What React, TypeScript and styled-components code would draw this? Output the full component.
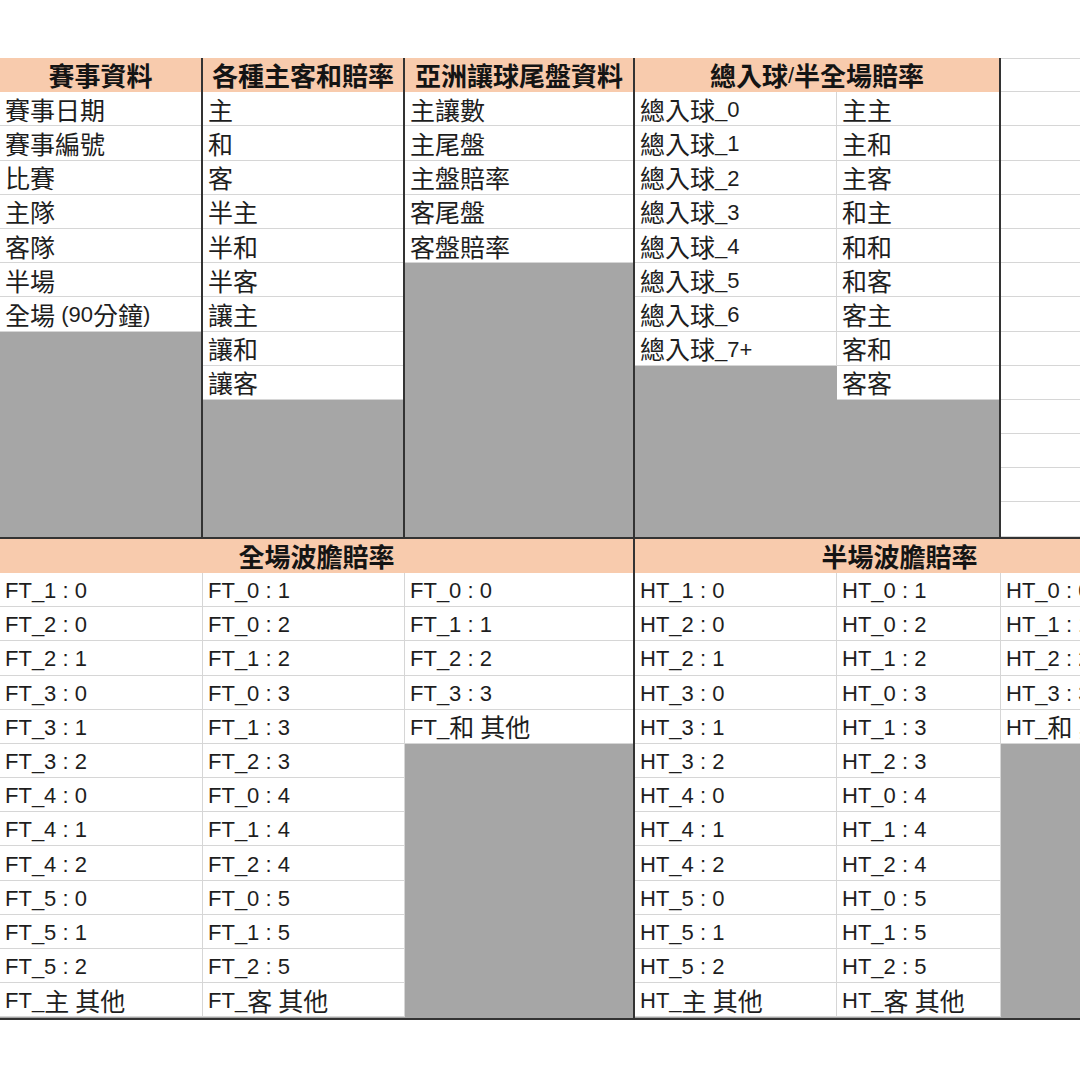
import React from "react";
import styled, { createGlobalStyle, css } from "styled-components";

const ROW = 34.2;
const DARK = "#333333";
const GRID = "#d6d6d6";
const PEACH = "#f8cbad";
const SHADE = "#a6a6a6";

const GlobalStyle = createGlobalStyle`
  html, body {
    margin: 0;
    padding: 0;
    background: #ffffff;
    overflow: hidden;
  }
  body {
    font-family: "Noto Sans CJK TC", "Noto Sans CJK SC", sans-serif;
    color: #1e1e1e;
  }
`;

const Sheet = styled.div`
  width: 1080px;
  height: 1080px;
  overflow: hidden;
  padding-top: 58px;
  box-sizing: border-box;
`;

const Section = styled.div`
  display: flex;
  width: 1164px;
  height: ${ROW * 14}px;
  border-bottom: 2px solid ${DARK};
`;

const Group = styled.div<{ $w: number; $dark?: boolean }>`
  display: flex;
  flex-direction: column;
  flex: 0 0 ${(p) => p.$w}px;
  width: ${(p) => p.$w}px;
  box-sizing: border-box;
  ${(p) =>
    p.$dark &&
    css`
      border-right: 2px solid ${DARK};
    `}
`;

const Header = styled.div`
  height: ${ROW}px;
  flex: 0 0 ${ROW}px;
  background: ${PEACH};
  display: flex;
  align-items: center;
  justify-content: center;
  font-weight: 700;
  font-size: 26px;
  line-height: 1;
  color: #141414;
  white-space: nowrap;
`;

const Columns = styled.div`
  display: flex;
  flex: 1;
  min-height: 0;
`;

const Column = styled.div<{ $w?: number }>`
  display: flex;
  flex-direction: column;
  ${(p) => (p.$w ? `flex: 0 0 ${p.$w}px; width: ${p.$w}px;` : "flex: 1;")}
  min-width: 0;
`;

const Cell = styled.div<{ $line?: boolean; $top?: boolean }>`
  height: ${ROW}px;
  flex: 0 0 ${ROW}px;
  box-sizing: border-box;
  background: #ffffff;
  border-bottom: 1px solid ${GRID};
  ${(p) => p.$line && `border-right: 1px solid ${GRID};`}
  ${(p) => p.$top && `border-top: 1px solid ${GRID};`}
  display: flex;
  align-items: center;
  padding: 1px 0 0 5px;
  font-size: 25px;
  line-height: 1;
  white-space: nowrap;
`;

const Shade = styled.div`
  flex: 1;
  background: ${SHADE};
`;

const Latin = styled.span<{ $bold?: boolean }>`
  font-family: "Liberation Sans", Arial, sans-serif;
  font-size: 22px;
  font-weight: ${(p) => (p.$bold ? 700 : 400)};
  white-space: pre;
  position: relative;
  top: 1px;
`;

const CJK_RE = /([\u2E80-\u9FFF\uF900-\uFAFF\uFF00-\uFFEF]+)/;

function Mixed({ text }: { text: string }) {
  const parts = text.split(CJK_RE).filter((p) => p !== "");
  return (
    <>
      {parts.map((p, i) =>
        CJK_RE.test(p) ? (
          <React.Fragment key={i}>{p}</React.Fragment>
        ) : (
          <Latin key={i} $bold={p === "7+"}>
            {p}
          </Latin>
        )
      )}
    </>
  );
}

function DataColumn({
  items,
  w,
  line,
}: {
  items: string[];
  w?: number;
  line?: boolean;
}) {
  return (
    <Column $w={w}>
      {items.map((t, i) => (
        <Cell key={i} $line={line}>
          <Mixed text={t} />
        </Cell>
      ))}
      <Shade />
    </Column>
  );
}

const topA = ["賽事日期", "賽事編號", "比賽", "主隊", "客隊", "半場", "全場 (90分鐘)"];
const topB = ["主", "和", "客", "半主", "半和", "半客", "讓主", "讓和", "讓客"];
const topC = ["主讓數", "主尾盤", "主盤賠率", "客尾盤", "客盤賠率"];
const topD = [
  "總入球_0",
  "總入球_1",
  "總入球_2",
  "總入球_3",
  "總入球_4",
  "總入球_5",
  "總入球_6",
  "總入球_7+",
];
const topE = ["主主", "主和", "主客", "和主", "和和", "和客", "客主", "客和", "客客"];

const score1 = ["1 : 0", "2 : 0", "2 : 1", "3 : 0", "3 : 1", "3 : 2", "4 : 0", "4 : 1", "4 : 2", "5 : 0", "5 : 1", "5 : 2", "主 其他"];
const score2 = ["0 : 1", "0 : 2", "1 : 2", "0 : 3", "1 : 3", "2 : 3", "0 : 4", "1 : 4", "2 : 4", "0 : 5", "1 : 5", "2 : 5", "客 其他"];
const score3 = ["0 : 0", "1 : 1", "2 : 2", "3 : 3", "和 其他"];

const pre = (p: string, arr: string[]) => arr.map((s) => `${p}_${s}`);

export default function App() {
  return (
    <>
      <GlobalStyle />
      <Sheet>
        <Section>
          <Group $w={203} $dark>
            <Header>賽事資料</Header>
            <Columns>
              <DataColumn items={topA} />
            </Columns>
          </Group>
          <Group $w={202} $dark>
            <Header>各種主客和賠率</Header>
            <Columns>
              <DataColumn items={topB} />
            </Columns>
          </Group>
          <Group $w={230} $dark>
            <Header>亞洲讓球尾盤資料</Header>
            <Columns>
              <DataColumn items={topC} />
            </Columns>
          </Group>
          <Group $w={366} $dark>
            <Header>
              <Mixed text="總入球/半全場賠率" />
            </Header>
            <Columns>
              <DataColumn items={topD} w={202} line />
              <DataColumn items={topE} />
            </Columns>
          </Group>
          <Group $w={163}>
            <Column>
              {Array.from({ length: 14 }).map((_, i) => (
                <Cell key={i} $top={i === 0} />
              ))}
            </Column>
          </Group>
        </Section>
        <Section>
          <Group $w={635} $dark>
            <Header>全場波膽賠率</Header>
            <Columns>
              <DataColumn items={pre("FT", score1)} w={203} line />
              <DataColumn items={pre("FT", score2)} w={202} line />
              <DataColumn items={pre("FT", score3)} />
            </Columns>
          </Group>
          <Group $w={529}>
            <Header>半場波膽賠率</Header>
            <Columns>
              <DataColumn items={pre("HT", score1)} w={202} line />
              <DataColumn items={pre("HT", score2)} w={164} line />
              <DataColumn items={pre("HT", score3)} />
            </Columns>
          </Group>
        </Section>
      </Sheet>
    </>
  );
}
